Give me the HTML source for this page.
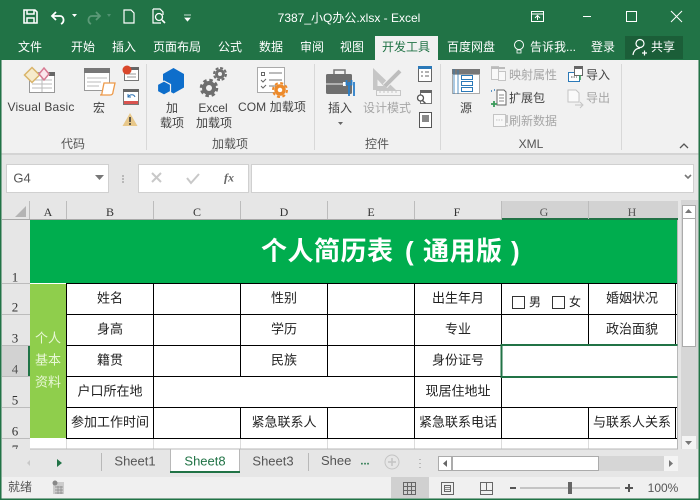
<!DOCTYPE html>
<html><head><meta charset="utf-8"><style>
html,body{margin:0;padding:0}
body{width:700px;height:500px;overflow:hidden;position:relative;background:#e6e6e6;font-family:"Liberation Sans","Noto Sans CJK SC",sans-serif;color:#333}
.a{position:absolute;white-space:nowrap}
.t{position:absolute;white-space:nowrap;transform:translate(-50%,-50%);line-height:1}
.tab{color:#fff;font-size:12px}
.r{font-size:12px;color:#444}
.g{color:#a6a6a6}
.gl{font-size:12px;color:#555}
.c{font-size:13px;color:#222}
.h{font-family:"Liberation Serif",serif;font-size:12px;color:#333}
.n{font-family:"Liberation Serif",serif;font-size:13px;color:#333}
.ti{position:absolute;top:238px;color:#fff;font-size:26px;line-height:26px;font-weight:bold;white-space:nowrap;letter-spacing:.5px}
</style></head><body>
<div class="a" style="left:0;top:0;width:700px;height:60px;background:#217346"></div>
<div class="a" style="left:2px;top:60px;width:696px;height:93px;background:#f1f1f1"></div>
<div class="a" style="left:0;top:153px;width:700px;height:2px;background:#d4d4d4"></div>
<div class="a" style="left:375px;top:36px;width:63px;height:24px;background:#f1f1f1"></div>
<div class="a" style="left:625px;top:36px;width:58px;height:23px;background:#1b5e38"></div>

<div class="t" style="left:349px;top:18px;color:#fff;font-size:12px">7387_小Q办公.xlsx - Excel</div>
<div class="t tab" style="left:30px;top:47px">文件</div>
<div class="t tab" style="left:83px;top:47px">开始</div>
<div class="t tab" style="left:124px;top:47px">插入</div>
<div class="t tab" style="left:177px;top:47px">页面布局</div>
<div class="t tab" style="left:230px;top:47px">公式</div>
<div class="t tab" style="left:271px;top:47px">数据</div>
<div class="t tab" style="left:312px;top:47px">审阅</div>
<div class="t tab" style="left:352px;top:47px">视图</div>
<div class="t" style="left:406px;top:47px;font-size:12px;color:#217346">开发工具</div>
<div class="t tab" style="left:471px;top:47px">百度网盘</div>
<div class="t tab" style="left:553px;top:47px">告诉我...</div>
<div class="t tab" style="left:603px;top:47px">登录</div>
<div class="t tab" style="left:663px;top:47px">共享</div>

<div class="t r" style="left:41px;top:107px;letter-spacing:.15px">Visual Basic</div>
<div class="t r" style="left:99px;top:108px">宏</div>
<div class="t r" style="left:172px;top:108px">加</div>
<div class="t r" style="left:172px;top:123px">载项</div>
<div class="t r" style="left:213px;top:108px">Excel</div>
<div class="t r" style="left:214px;top:123px">加载项</div>
<div class="t r" style="left:272px;top:107px;letter-spacing:.1px">COM 加载项</div>
<div class="t r" style="left:340px;top:108px">插入</div>
<div class="t r g" style="left:387px;top:108px">设计模式</div>
<div class="t r" style="left:466px;top:108px">源</div>
<div class="t r g" style="left:533px;top:75px">映射属性</div>
<div class="t r" style="left:527px;top:98px">扩展包</div>
<div class="t r g" style="left:533px;top:121px">刷新数据</div>
<div class="t r" style="left:598px;top:75px">导入</div>
<div class="t r g" style="left:598px;top:98px">导出</div>
<div class="t gl" style="left:73px;top:144px">代码</div>
<div class="t gl" style="left:230px;top:144px">加载项</div>
<div class="t gl" style="left:377px;top:144px">控件</div>
<div class="t gl" style="left:531px;top:144px">XML</div>

<!-- formula bar -->
<div class="a" style="left:6px;top:164px;width:101px;height:27px;background:#fff;border:1px solid #d0d0d0"></div>
<div class="t" style="left:22px;top:178px;font-size:13px;color:#555">G4</div>
<div class="a" style="left:138px;top:164px;width:109px;height:27px;background:#fff;border:1px solid #d0d0d0"></div>
<div class="a" style="left:251px;top:164px;width:441px;height:27px;background:#fff;border:1px solid #d0d0d0"></div>
<div class="t" style="left:229px;top:178px;font:italic bold 12px 'Liberation Serif',serif;color:#666">fx</div>

<!-- grid -->
<div class="a" style="left:2px;top:200px;width:676px;height:249px;background:#fff"></div>
<div class="a" style="left:2px;top:200px;width:28px;height:249px;background:#e6e6e6"></div>
<div class="a" style="left:2px;top:200px;width:676px;height:20px;background:#e6e6e6"></div>
<div class="a" style="left:502px;top:201px;width:176px;height:17px;background:#d2d2d2"></div>
<div class="a" style="left:502px;top:218px;width:176px;height:2px;background:#217346"></div>
<div class="a" style="left:2px;top:346px;width:26px;height:30px;background:#d2d2d2"></div>
<div class="a" style="left:28px;top:346px;width:2px;height:30px;background:#217346"></div>
<div class="a" style="left:30px;top:220px;width:647px;height:63px;background:#00ad4e"></div>
<div class="a" style="left:30px;top:284px;width:36px;height:154px;background:#8fce4c"></div>
<div class="ti" style="left:261px">个人简历表</div>
<div class="ti" style="left:405px">(</div>
<div class="ti" style="left:423px">通用版</div>
<div class="ti" style="left:511px">)</div>
<div class="t" style="left:48px;top:338px;color:#e8f7d6;font-size:13px">个人</div>
<div class="t" style="left:48px;top:360px;color:#e8f7d6;font-size:13px">基本</div>
<div class="t" style="left:48px;top:382px;color:#e8f7d6;font-size:13px">资料</div>

<div class="t h" style="left:48px;top:212px">A</div><div class="t h" style="left:110px;top:212px">B</div><div class="t h" style="left:197px;top:212px">C</div><div class="t h" style="left:284px;top:212px">D</div><div class="t h" style="left:371px;top:212px">E</div><div class="t h" style="left:457px;top:212px">F</div><div class="t h" style="left:544px;top:212px;color:#555">G</div><div class="t h" style="left:632px;top:212px;color:#555">H</div>
<div class="t n" style="left:15px;top:277px">1</div><div class="t n" style="left:15px;top:307px">2</div><div class="t n" style="left:15px;top:338px">3</div><div class="t n" style="left:15px;top:369px;color:#555">4</div><div class="t n" style="left:15px;top:400px">5</div><div class="t n" style="left:15px;top:431px">6</div><div class="t n" style="left:15px;top:443px;height:6px;overflow:hidden;transform:translate(-50%,0)">7</div>

<div class="t c" style="left:110px;top:298px">姓名</div><div class="t c" style="left:284px;top:298px">性别</div><div class="t c" style="left:458px;top:298px">出生年月</div><div class="t c" style="left:632px;top:298px">婚姻状况</div>
<div class="t c" style="left:110px;top:329px">身高</div><div class="t c" style="left:284px;top:329px">学历</div><div class="t c" style="left:458px;top:329px">专业</div><div class="t c" style="left:632px;top:329px">政治面貌</div>
<div class="t c" style="left:110px;top:360px">籍贯</div><div class="t c" style="left:284px;top:360px">民族</div><div class="t c" style="left:458px;top:360px">身份证号</div>
<div class="t c" style="left:110px;top:391px">户口所在地</div><div class="t c" style="left:458px;top:391px">现居住地址</div>
<div class="t c" style="left:110px;top:422px">参加工作时间</div><div class="t c" style="left:284px;top:422px">紧急联系人</div><div class="t c" style="left:458px;top:422px">紧急联系电话</div><div class="t c" style="left:632px;top:422px">与联系人关系</div>
<div class="t" style="left:535px;top:302px;font-size:12px;color:#222">男</div><div class="t" style="left:575px;top:302px;font-size:12px;color:#222">女</div>

<!-- sheet tabs -->
<div class="a" style="left:2px;top:449px;width:436px;height:26px;background:#e6e6e6"></div>
<div class="a" style="left:170px;top:449px;width:69px;height:22px;background:#fff"></div>
<div class="a" style="left:170px;top:471px;width:70px;height:2px;background:#217346"></div>
<div class="t" style="left:135px;top:461px;font-size:13px;color:#555">Sheet1</div>
<div class="t" style="left:205px;top:461px;font-size:13px;color:#217346">Sheet8</div>
<div class="t" style="left:273px;top:461px;font-size:13px;color:#555">Sheet3</div>
<div class="a" style="left:321px;top:453px;font-size:13px;line-height:16px;color:#555">Shee</div>
<div class="t" style="left:365px;top:462px;font-size:11px;font-weight:bold;color:#217346">...</div>

<!-- scrollbars -->
<div class="a" style="left:681px;top:200px;width:17px;height:249px;background:#d6d6d6"></div>
<div class="a" style="left:682px;top:205px;width:14px;height:14px;background:#fff;box-shadow:inset 0 0 0 1px #ababab"></div>
<div class="a" style="left:682px;top:219px;width:14px;height:128px;background:#fff;box-shadow:inset 1px 0 0 #ababab,inset -1px 0 0 #ababab,inset 0 -1px 0 #ababab"></div>
<div class="a" style="left:682px;top:436px;width:14px;height:13px;background:#f4f4f4"></div>
<div class="a" style="left:438px;top:456px;width:240px;height:15px;background:#d6d6d6"></div>
<div class="a" style="left:438px;top:456px;width:14px;height:15px;background:#fff;box-shadow:inset 0 0 0 1px #ababab"></div>
<div class="a" style="left:452px;top:456px;width:147px;height:15px;background:#fff;box-shadow:inset 0 0 0 1px #ababab"></div>
<div class="a" style="left:664px;top:456px;width:14px;height:15px;background:#f4f4f4"></div>

<!-- status -->
<div class="a" style="left:2px;top:477px;width:696px;height:21px;background:#f0f0f0"></div>
<div class="a" style="left:391px;top:477px;width:38px;height:21px;background:#d0d0d0"></div>
<div class="t" style="left:20px;top:487px;font-size:12px;color:#555">就绪</div>
<div class="t" style="left:663px;top:488px;font-size:12px;color:#555">100%</div>

<svg class="a" style="left:0;top:0" width="700" height="500" viewBox="0 0 700 500" fill="none">
<!-- window border -->
<path d="M.75 60V499.250H699.250V60" stroke="#217346" stroke-width="1.500"/>
<!-- QAT -->
<path d="M24 10h11l2 2v11H24z" stroke="#fff" stroke-width="1.6"/><path d="M27 10v4h7v-4M27 23v-5h7v5" stroke="#fff" stroke-width="1.5"/>
<path d="M56 12l-4 4 4 4" stroke="#fff" stroke-width="1.8"/><path d="M52 16h8c4 0 5 6 1 8" stroke="#fff" stroke-width="1.8"/><path d="M72 14h5l-2.500 3z" fill="#fff"/>
<path d="M96 12l4 4-4 4M100 16h-8c-4 0-5 6-1 8" stroke="#5c9a78" stroke-width="1.8"/><path d="M107 14h4l-2 3z" fill="#4f9170"/>
<path d="M124 10h7l3 3v10h-10z" stroke="#fff" stroke-width="1.2"/>
<path d="M153 9h7l3 3v3M153 9v14h8" stroke="#fff" stroke-width="1.2"/><circle cx="159" cy="17" r="3.500" stroke="#fff" stroke-width="1.3"/><path d="M162 20l3 3" stroke="#fff" stroke-width="1.6"/>
<path d="M184 15h7M185 18h5l-2.500 3z" fill="#fff" stroke="#fff" stroke-width=".8"/>
<!-- window buttons -->
<path d="M531.500 11.500h12v10h-12zM531.500 14h12M537.500 20v-4M535 18l2.500-2.500 2.500 2.500" stroke="#fff"/>
<path d="M583 16.500h8" stroke="#fff"/><rect x="626.500" y="11.500" width="10" height="10" stroke="#fff"/><path d="M671 11l11 11M682 11l-11 11" stroke="#fff"/>
<!-- lightbulb / share -->
<circle cx="519" cy="45" r="4.500" stroke="#fff"/><path d="M517 50h4v3h-4z" stroke="#fff" stroke-width=".8"/>
<circle cx="640" cy="43.500" r="4" stroke="#fff" stroke-width="1.200"/><path d="M633 55c.5-4 3-6.500 7-7M642 53h5M644.500 50.500v5" stroke="#fff" stroke-width="1.200"/>
<!-- separators -->
<path d="M146.500 64v86M314.500 64v86M440.500 64v86M621.500 64v86" stroke="#d8d8d8"/>
<!-- VB -->
<rect x="29.500" y="72.500" width="25" height="20" fill="#fff" stroke="#999"/><path d="M49 72h6v4h-6z" fill="#666"/><path d="M32 80h20M32 84h20M32 88h20M42 76v16" stroke="#bbb"/>
<path d="M32 67.500l7.500 7.500-7.500 7.500-7.500-7.500z" fill="#f6ebcc" stroke="#d9b46a" stroke-width="1.500"/><path d="M44 68l5 6-5 6-5-6z" fill="#fbe6ec" stroke="#d77a93" stroke-width="1.500"/>
<!-- Macro -->
<rect x="84.500" y="68.500" width="25" height="22" fill="#fff" stroke="#999"/><path d="M84 68h26v5H84z" fill="#777"/><path d="M87 78h20M87 82h14M87 86h12" stroke="#bbb"/>
<path d="M104 83h11l-2 9c0 2-1 3-3 3h-10c2 0 2-1 2-2z" fill="#fff" stroke="#ed9a4a" stroke-width="1.300"/>
<!-- record/rel/warn -->
<rect x="124.500" y="69.500" width="14" height="11" fill="#fff" stroke="#777"/><path d="M128 67h11v3h-11z" fill="#666"/><path d="M127 74h9M127 77h9" stroke="#999"/><circle cx="127" cy="70" r="4.500" fill="#d9472b"/>
<rect x="123.500" y="89.500" width="15" height="15" fill="#fff" stroke="#777"/><path d="M123 89h16v3h-16z" fill="#666"/><path d="M124 101h14v3h-14z" fill="#d9534f"/><path d="M128 97c2-3 6-3 7 0M128 94v3h3" stroke="#2a6fb0"/>
<path d="M130 113l7.500 13h-15z" fill="#e8c88a"/><path d="M130 117v5M130 123v2" stroke="#333" stroke-width="1.500"/>
<!-- Addin hex -->
<path d="M173.500 68l10.500 6v13.500l-10.500 6-10.500-6v-13.500z" fill="#0e6ecb"/><path d="M164 81l6.500 3.500v7l-6.500 3.500-6.500-3.500v-7z" fill="#0e6ecb" stroke="#f1f1f1" stroke-width="1.200"/>
<!-- gears -->
<circle cx="209" cy="88" r="5" stroke="#6e6e6e" stroke-width="4"/><circle cx="209" cy="88" r="8" stroke="#6e6e6e" stroke-width="2.500" stroke-dasharray="3.500 2.800"/>
<circle cx="220" cy="74" r="3.500" stroke="#6e6e6e" stroke-width="3"/><circle cx="220" cy="74" r="6" stroke="#6e6e6e" stroke-width="2" stroke-dasharray="3 1.700"/>
<!-- COM -->
<rect x="257.500" y="67.500" width="27" height="25" fill="#fff" stroke="#aaa"/><path d="M269 73h13M269 80h13M269 86h8" stroke="#777"/><rect x="261.500" y="72.500" width="3" height="3" stroke="#666"/><path d="M261 80l2 2 3-3M261 86l2 2 3-3" stroke="#666"/>
<circle cx="280" cy="90" r="4" stroke="#ed8a2a" stroke-width="3.500"/><circle cx="280" cy="90" r="7" stroke="#ed8a2a" stroke-width="2" stroke-dasharray="3 2.500"/>
<!-- toolbox -->
<path d="M334 74v-4h11v4" stroke="#777" stroke-width="1.500"/><rect x="326" y="74" width="26" height="20" rx="1.500" fill="#6f6f6f"/><path d="M326 84h17" stroke="#f1f1f1"/><rect x="343" y="82" width="3" height="4" fill="#fff"/>
<path d="M349 82v14M346.500 80v4.500h5V80" stroke="#2a7fc9" stroke-width="1.800"/><path d="M354 82v14" stroke="#2a7fc9" stroke-width="1.800"/>
<!-- design mode -->
<path fill-rule="evenodd" d="M373 68v22h23zM377.500 79.500v6.500h6z" fill="#c6c6c6"/><path d="M385 86l15-16" stroke="#f1f1f1" stroke-width="6"/><path d="M385 86l15-15" stroke="#bdbdbd" stroke-width="4"/><rect x="376.500" y="90.500" width="24" height="5" fill="#f4f4f4" stroke="#c6c6c6"/><path d="M380 91v2M384 91v2M388 91v2M392 91v2M396 91v2" stroke="#c6c6c6"/>
<!-- small controls -->
<rect x="418.500" y="66.500" width="13" height="15" fill="#fff" stroke="#666"/><path d="M418 66h14v3h-14z" fill="#2b79b8"/><path d="M421 72h2M425 72h4M421 76h2M425 76h4" stroke="#666"/>
<rect x="420.500" y="90.500" width="11" height="13" fill="#fff" stroke="#777"/><path d="M420 90h12v3h-12z" fill="#666"/><circle cx="420.500" cy="98" r="3" fill="#fff" stroke="#555" stroke-width="1.300"/><path d="M422.500 100.500l3 3" stroke="#555" stroke-width="1.400"/>
<rect x="419.500" y="112.500" width="12" height="15" fill="#fff" stroke="#555"/><path d="M422 115h7v7h-7z" fill="#888"/>
<!-- Source -->
<path d="M452 69h28v5h-28z" fill="#777"/><rect x="452.500" y="74.500" width="27" height="19" fill="#fff" stroke="#aaa"/><path d="M454 69v25M458 70v24" stroke="#2b79b8" stroke-width=".8"/><rect x="461.500" y="75.500" width="11" height="4" fill="#fff" stroke="#2b79b8"/><rect x="461.500" y="81.500" width="11" height="4" fill="#fff" stroke="#2b79b8"/><rect x="461.500" y="87.500" width="11" height="4" fill="#fff" stroke="#2b79b8"/>
<!-- xml small -->
<rect x="491.500" y="66.500" width="7" height="13" stroke="#c4c4c4" fill="#f8f8f8"/><rect x="498.500" y="71.500" width="7" height="9" stroke="#c4c4c4" fill="#f8f8f8"/><path d="M491 67h14v2h-14z" fill="#bbb"/>
<path d="M497 90h7l2 2v13h-9z" fill="#fff" stroke="#666"/><path d="M499 95h5M499 98h5M499 101h5" stroke="#888"/><path d="M491 104h6M494 101v6" stroke="#3a9a5a" stroke-width="1.800"/><path d="M491 91h1M494 90h1" stroke="#2b79b8" stroke-width="1.500"/>
<rect x="493.500" y="114.500" width="12" height="12" fill="#f8f8f8" stroke="#c4c4c4"/><path d="M507 115v8M507 125v1.500" stroke="#bbb" stroke-width="1.600"/><path d="M496 120h7" stroke="#c4c4c4" stroke-dasharray="1.500 1"/>
<rect x="568.500" y="72.500" width="11" height="9" fill="#fff" stroke="#2b79b8"/><rect x="574.500" y="66.500" width="8" height="9" fill="#fff" stroke="#666"/><path d="M574 67h9v2h-9z" fill="#666"/><path d="M580 80v-5" stroke="#3a9a5a" stroke-width="1.500"/><path d="M571 77h6" stroke="#555" stroke-dasharray="1.500 1"/>
<path d="M568 90h8l3 3v9h-11z" fill="#fafafa" stroke="#c4c4c4"/><path d="M575 105h7M580 102l3 3-3 3" stroke="#c4c4c4"/>
<path d="M680 148l4-4 4 4" stroke="#555" stroke-width="1.300"/>
<path d="M338 122h5l-2.500 3z" fill="#666"/>
<!-- formula icons -->
<path d="M95 175h9l-4.500 5z" fill="#777"/><path d="M123 175v2M123 178v2M123 181v2" stroke="#aaa" stroke-width="1.500"/>
<path d="M152 173l9 9M161 173l-9 9" stroke="#c8c8c8" stroke-width="2"/><path d="M187 178l4 5 8-9" stroke="#c8c8c8" stroke-width="2"/>
<path d="M685 175l3 3 3-3" stroke="#777" stroke-width="1.600"/>
<!-- corner triangle -->
<path d="M26 206v11H15z" fill="#b4b4b4"/>
<!-- header separators -->
<path d="M29.500 201v18M66.500 201v18M153.500 201v18M240.500 201v18M327.500 201v18M414.500 201v18M501.500 201v18M588.500 201v18" stroke="#bcbcbc"/>
<path d="M2 219.500h500" stroke="#a8a8a8"/>
<path d="M2 283.500h28M2 314.500h28M2 345.500h28M2 376.500h28M2 407.500h28M2 438.500h28" stroke="#bcbcbc"/>
<!-- faint row 7 grid -->
<path d="M66.500 439v10M153.500 439v10M240.500 439v10M327.500 439v10M414.500 439v10M501.500 439v10M588.500 439v10" stroke="#dcdcdc"/>
<path d="M677.500 220V449M30 449h648" stroke="#b8b8b8"/>
<!-- table lines -->
<path d="M66 283.500h611M66 314.500h611M66 345.500h436M66 376.500h611M66 407.500h611M66 438.500h611" stroke="#000"/>
<path d="M66.500 283v156M153.500 283v156M240.500 283v62M240.500 345v31M240.500 407v32M327.500 283v93M327.500 407v32M414.500 283v156M501.500 283v156M588.500 283v62M588.500 407v32M675.500 283v62M675.500 407v32" stroke="#000"/>
<!-- selection -->
<path d="M677.500 345H501.500V377H677.500" stroke="#217346" stroke-width="2"/>
<!-- checkboxes -->
<rect x="512.500" y="296.500" width="12" height="12" stroke="#333"/><rect x="552.500" y="296.500" width="12" height="12" stroke="#333"/>
<!-- tab bar -->
<path d="M30 460l-3 3 3 3" fill="#c8c8c8"/><path d="M57 459l5 4-5 4z" fill="#217346"/>
<path d="M101.500 453v18M239.500 449v22M308.500 453v18" stroke="#b8b8b8"/><path d="M170.500 449v22" stroke="#b8b8b8"/>
<circle cx="392" cy="462" r="7" stroke="#c4c4c4"/><path d="M388 462h8M392 458v8" stroke="#c4c4c4" stroke-width="1.500"/><path d="M420 459v1M420 463v1M420 467v1" stroke="#aaa" stroke-width="1.500"/>
<!-- scroll arrows -->
<path d="M685 213l3.500-4 3.500 4z" fill="#777"/><path d="M685 441l3.500 4 3.500-4z" fill="#777"/><path d="M447 460l-4 3.500 4 3.500z" fill="#666"/><path d="M669 460l4 3.500-4 3.500z" fill="#777"/>
<!-- status icons -->
<rect x="53" y="482" width="11" height="12" fill="#ccc"/><circle cx="55" cy="483" r="2.500" fill="#888"/><path d="M55 487h8M55 490h8M55 493h8M58 486v8M61 486v8" stroke="#888" stroke-width=".7"/>
<path d="M403.500 482.500h12v12h-12zM407.500 482v13M411.500 482v13M403 486.500h13M403 490.500h13" stroke="#666"/>
<path d="M441.500 482.500h12v12h-12zM444.500 485.500h6v6h-6z" stroke="#666"/><path d="M445 487.500h5M445 489.500h5" stroke="#888"/>
<path d="M480.500 482.500h12v12h-12zM486.500 482v8M480 490.500h13" stroke="#666" fill="none"/>
<path d="M510 488h6M625 488h8M629 484v8" stroke="#555" stroke-width="2"/><path d="M520 488h100" stroke="#999"/><rect x="568" y="482" width="4" height="12" fill="#666"/>
</svg>
</body></html>
